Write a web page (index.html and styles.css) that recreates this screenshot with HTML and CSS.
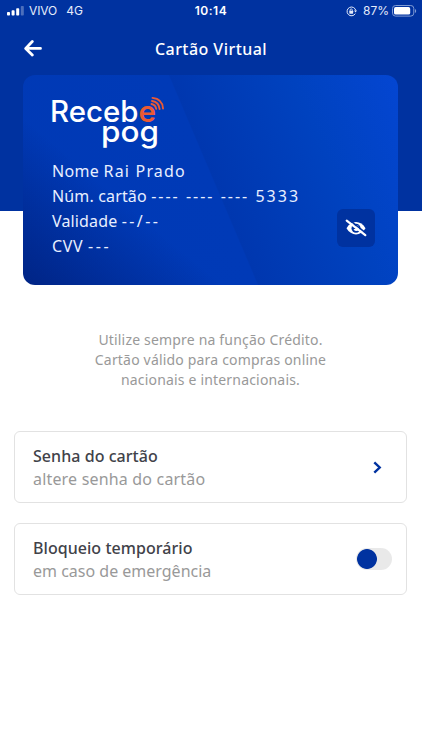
FILE: index.html
```html
<!DOCTYPE html>
<html lang="pt-BR">
<head>
<meta charset="utf-8">
<meta name="viewport" content="width=device-width, initial-scale=1">
<title>Cartão Virtual</title>
<link rel="stylesheet" href="styles.css">
</head>
<body>
<header class="top">
  <div class="status">
    <div class="carrier">
      <svg width="17" height="10" viewBox="0 0 17 10" fill="#fff"><rect x="0" y="6" width="3" height="3.6" rx=".8"/><rect x="4.6" y="4.3" width="3" height="5.3" rx=".8"/><rect x="9.2" y="2.2" width="3" height="7.4" rx=".8"/><rect x="13.8" y="0" width="3" height="9.6" rx=".8" opacity=".3"/></svg>
      <span class="operator">VIVO</span><span class="network">4G</span>
    </div>
    <time class="clock">10:14</time>
    <div class="power">
      <svg width="11" height="11" viewBox="0 0 11 11" fill="none" stroke="#e4ebfb"><path d="M9.3 7.6A4.4 4.4 0 1 1 9.8 4.6"/><path d="M8 4.5h3L9.6 6.6z" fill="#e4ebfb" stroke="none"/><rect x="3.3" y="4.8" width="3.8" height="2.9" rx=".4" fill="#e4ebfb" stroke="none"/><path d="M4.1 5V4a1.1 1.1 0 0 1 2.2 0v1" stroke-width=".8"/></svg>
      <span class="percent">87%</span>
      <svg width="25" height="12" viewBox="0 0 25 12"><rect x=".5" y=".5" width="21.3" height="10.6" rx="3" fill="none" stroke="#7f9bd4"/><rect x="2" y="2" width="16.2" height="7.6" rx="1.7" fill="#fff"/><path d="M23 4v4c1.6-.5 1.6-3.500 0-4z" fill="#7f9bd4"/></svg>
    </div>
  </div>
  <nav class="bar">
    <svg class="back" width="18" height="17" viewBox="0 0 18 17" fill="none" stroke="#fff" stroke-width="2.8" stroke-linecap="round" stroke-linejoin="round"><path d="M8.300 1.600 1.700 8.400l6.600 6.700M2 8.400h14.500"/></svg>
    <h1 class="title">Cartão Virtual</h1>
    <span></span>
  </nav>
</header>
<main>
  <section class="card">
    <svg class="logo" width="118" height="58" viewBox="0 0 118 58">
      <g class="wordmark">
        <text x="-2" y="25.300" textLength="88.500" lengthAdjust="spacingAndGlyphs">Receb</text>
        <text class="accent" x="86.500" y="25.300" textLength="17.500" lengthAdjust="spacingAndGlyphs">e</text>
        <text class="pog" x="49" y="45.300" textLength="58" lengthAdjust="spacingAndGlyphs">pog</text>
      </g>
      <g fill="none" stroke="#ea5a35" stroke-width="1.900" stroke-linecap="round"><path d="M99.500 7q4 .8 4.700 4.800"/><path d="M100 4q7 1 7.600 8"/><path d="M100.500 .9q10 1 10.500 10.600"/></g>
    </svg>
    <p class="line name">Nome <span>Rai Prado</span></p>
    <p class="line number">Núm. cartão <span>---- ---- ---- 5333</span></p>
    <p class="line valid">Validade <span>--/--</span></p>
    <p class="line cvv">CVV <span>---</span></p>
    <button class="reveal" aria-label="Mostrar dados">
      <svg width="22" height="18" viewBox="0 0 22 18" fill="none"><path d="M1.500 9.300C6 .8 16 .8 20.500 9.300 16 17.500 6 17.500 1.500 9.300z" fill="#fff"/><circle cx="11" cy="9.200" r="4.500" fill="#0032a0"/><path d="M11 6a3 3 0 1 1-2.500 4.300l2.500-.6z" fill="#fff"/><path d="M4 .7 22 15" stroke="#0032a0" stroke-width="1.600"/><path d="M1.700 1.700 20.300 16.200" stroke="#fff" stroke-width="2.200" stroke-linecap="round"/></svg>
    </button>
  </section>
  <p class="note">Utilize sempre na função Crédito.<br>Cartão válido para compras online<br>nacionais e internacionais.</p>
  <section class="option">
    <div><h2>Senha do cartão</h2><p class="password-hint">altere senha do cartão</p></div>
    <svg class="chevron" width="9" height="13" viewBox="0 0 9 13" fill="none" stroke="#0032a0" stroke-width="2.400"><path d="M1.300 1.300 6.700 6.500 1.300 11.700"/></svg>
  </section>
  <section class="option">
    <div><h2>Bloqueio temporário</h2><p>em caso de emergência</p></div>
    <span class="toggle"></span>
  </section>
</main>
</body>
</html>
```
FILE: styles.css
```css
* { box-sizing: border-box; }
body { margin: 0; background: #fff; font-family: "Noto Sans", sans-serif; }
h1, h2, p { margin: 0; font-weight: 400; }
svg { display: block; flex: none; }
.top { height: 211px; background: #0032a0; color: #fff; }
.status { height: 22px; padding: 0 7px; display: grid; grid-template-columns: 1fr auto 1fr; align-items: center; font: 12px/22px Inter, sans-serif; color: #e4ebfb; }
.carrier, .power { display: flex; align-items: center; }
.operator { margin-left: 5px; letter-spacing: -.1px; }
.network { margin-left: 9px; }
.clock { font-weight: 600; color: #fff; letter-spacing: .5px; }
.power { justify-content: flex-end; margin-right: -2px; }
.percent { margin: 0 3px 0 6px; }
.bar { height: 54px; padding: 0 24px; display: grid; grid-template-columns: 1fr auto 1fr; align-items: center; }
.title { font-size: 16px; font-weight: 500; line-height: 24px; letter-spacing: .45px; }
.back { margin-top: -2px; }
.card { position: relative; margin: -136px 24px 0 23px; height: 210px; padding: 22px 29px; border-radius: 12px; color: #e8efff; background: linear-gradient(40deg, rgba(0, 15, 85, .5), rgba(0, 30, 130, 0) 32%), linear-gradient(67deg, #0039b5 0%, #003ab7 50.500%, #0037af 50.800%, #0042bf 77%, #0446d2 100%); }
.logo { overflow: visible; margin-bottom: 4px; }
.wordmark { font: 500 29.500px Inter, sans-serif; fill: #fff; }
.wordmark .accent { fill: #ea5a35; font-weight: 600; }
.line { font-size: 16px; line-height: 25px; white-space: pre; }
.name { letter-spacing: .3px; }
.name span { letter-spacing: 1.200px; }
.number { letter-spacing: .15px; }
.number span { letter-spacing: 2px; }
.valid { letter-spacing: .15px; }
.valid span { letter-spacing: 2.400px; }
.cvv { letter-spacing: .6px; }
.cvv span { letter-spacing: 2.600px; }
.reveal { position: absolute; right: 23px; bottom: 38px; width: 38px; height: 38px; padding: 0; border: 0; border-radius: 6px; background: #0032a0; display: grid; place-items: center; }
.note { margin-top: 45px; text-align: center; font-size: 14px; line-height: 20px; color: #999; letter-spacing: .18px; padding-right: 1px; }
.option { height: 72px; margin: 20px 15px 0 14px; padding: 2px 14px 0 18px; border: 1px solid #e2e2e2; border-radius: 6px; display: flex; align-items: center; justify-content: space-between; }
.note + .option { margin-top: 41px; }
.option h2 { font-size: 16px; line-height: 23px; font-weight: 500; color: #414249; letter-spacing: .05px; }
.option p { font-size: 16px; line-height: 23px; color: #999; }
.option .password-hint { letter-spacing: .18px; }
.chevron { margin: -1px 10px 0 0; }
.toggle { width: 36px; height: 22px; margin-top: -2px; border-radius: 11px; background: radial-gradient(circle at 11px 50%, #0032a0 9.500px, #e9e9e9 10.300px); }
```
